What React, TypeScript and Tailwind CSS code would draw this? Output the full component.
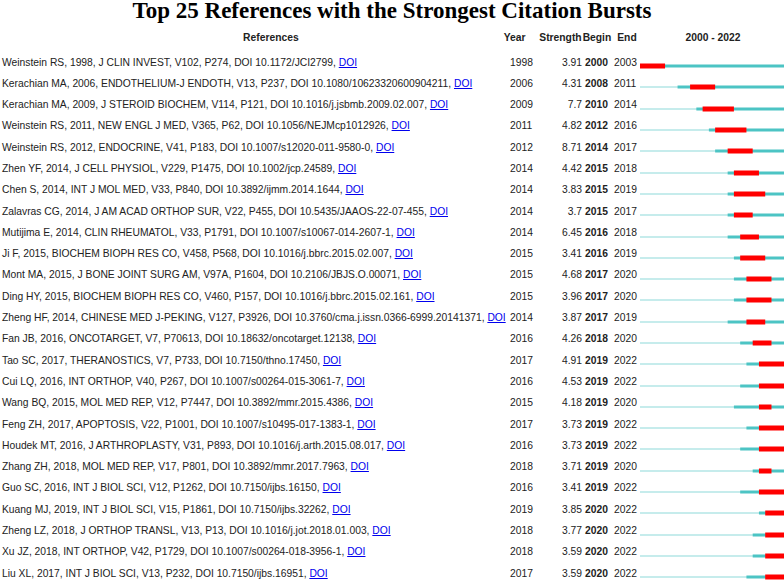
const rows: [string, number, string, number, number][] = [
  ["Weinstein RS, 1998, J CLIN INVEST, V102, P274, DOI 10.1172/JCI2799, ", 1998, "3.91", 2000, 2003],
  ["Kerachian MA, 2006, ENDOTHELIUM-J ENDOTH, V13, P237, DOI 10.1080/10623320600904211, ", 2006, "4.31", 2008, 2011],
  ["Kerachian MA, 2009, J STEROID BIOCHEM, V114, P121, DOI 10.1016/j.jsbmb.2009.02.007, ", 2009, "7.7", 2010, 2014],
  ["Weinstein RS, 2011, NEW ENGL J MED, V365, P62, DOI 10.1056/NEJMcp1012926, ", 2011, "4.82", 2012, 2016],
  ["Weinstein RS, 2012, ENDOCRINE, V41, P183, DOI 10.1007/s12020-011-9580-0, ", 2012, "8.71", 2014, 2017],
  ["Zhen YF, 2014, J CELL PHYSIOL, V229, P1475, DOI 10.1002/jcp.24589, ", 2014, "4.42", 2015, 2018],
  ["Chen S, 2014, INT J MOL MED, V33, P840, DOI 10.3892/ijmm.2014.1644, ", 2014, "3.83", 2015, 2019],
  ["Zalavras CG, 2014, J AM ACAD ORTHOP SUR, V22, P455, DOI 10.5435/JAAOS-22-07-455, ", 2014, "3.7", 2015, 2017],
  ["Mutijima E, 2014, CLIN RHEUMATOL, V33, P1791, DOI 10.1007/s10067-014-2607-1, ", 2014, "6.45", 2016, 2018],
  ["Ji F, 2015, BIOCHEM BIOPH RES CO, V458, P568, DOI 10.1016/j.bbrc.2015.02.007, ", 2015, "3.41", 2016, 2019],
  ["Mont MA, 2015, J BONE JOINT SURG AM, V97A, P1604, DOI 10.2106/JBJS.O.00071, ", 2015, "4.68", 2017, 2020],
  ["Ding HY, 2015, BIOCHEM BIOPH RES CO, V460, P157, DOI 10.1016/j.bbrc.2015.02.161, ", 2015, "3.96", 2017, 2020],
  ["Zheng HF, 2014, CHINESE MED J-PEKING, V127, P3926, DOI 10.3760/cma.j.issn.0366-6999.20141371, ", 2014, "3.87", 2017, 2019],
  ["Fan JB, 2016, ONCOTARGET, V7, P70613, DOI 10.18632/oncotarget.12138, ", 2016, "4.26", 2018, 2020],
  ["Tao SC, 2017, THERANOSTICS, V7, P733, DOI 10.7150/thno.17450, ", 2017, "4.91", 2019, 2022],
  ["Cui LQ, 2016, INT ORTHOP, V40, P267, DOI 10.1007/s00264-015-3061-7, ", 2016, "4.53", 2019, 2022],
  ["Wang BQ, 2015, MOL MED REP, V12, P7447, DOI 10.3892/mmr.2015.4386, ", 2015, "4.18", 2019, 2020],
  ["Feng ZH, 2017, APOPTOSIS, V22, P1001, DOI 10.1007/s10495-017-1383-1, ", 2017, "3.73", 2019, 2022],
  ["Houdek MT, 2016, J ARTHROPLASTY, V31, P893, DOI 10.1016/j.arth.2015.08.017, ", 2016, "3.73", 2019, 2022],
  ["Zhang ZH, 2018, MOL MED REP, V17, P801, DOI 10.3892/mmr.2017.7963, ", 2018, "3.71", 2019, 2020],
  ["Guo SC, 2016, INT J BIOL SCI, V12, P1262, DOI 10.7150/ijbs.16150, ", 2016, "3.41", 2019, 2022],
  ["Kuang MJ, 2019, INT J BIOL SCI, V15, P1861, DOI 10.7150/ijbs.32262, ", 2019, "3.85", 2020, 2022],
  ["Zheng LZ, 2018, J ORTHOP TRANSL, V13, P13, DOI 10.1016/j.jot.2018.01.003, ", 2018, "3.77", 2020, 2022],
  ["Xu JZ, 2018, INT ORTHOP, V42, P1729, DOI 10.1007/s00264-018-3956-1, ", 2018, "3.59", 2020, 2022],
  ["Liu XL, 2017, INT J BIOL SCI, V13, P232, DOI 10.7150/ijbs.16951, ", 2017, "3.59", 2020, 2022],
];

const W = 144;
const px = (y: number) => ((y - 2000) / 23) * W;

function Timeline({ year, begin, end }: { year: number; begin: number; end: number }) {
  const start = Math.max(px(year), 0);
  return (
    <svg width={W} height={21} className="block">
      <rect x={0} y={13} width={W} height={2} fill="#c6ecec" />
      <rect x={start} y={12.5} width={W - start} height={3} fill="#4cc4c4" />
      <rect x={px(begin)} y={11.5} width={px(end + 1) - px(begin)} height={5} fill="#ff0000" />
    </svg>
  );
}

export default function App() {
  return (
    <div className="w-[784px] h-[580px] bg-white overflow-hidden text-[10.3px] text-[#222]" style={{ fontFamily: "Arial, 'Liberation Sans', sans-serif" }}>
      <div className="h-[24px] text-center text-[23px] font-bold leading-[22px] text-black" style={{ fontFamily: "'Liberation Serif', serif" }}>
        Top 25 References with the Strongest Citation Bursts
      </div>
      <div className="flex h-[28px] items-center font-bold">
        <div className="w-[508px] text-center pl-[40px]">References</div>
        <div className="w-[38px] pl-[2px]">Year</div>
        <div className="w-[44px]">Strength</div>
        <div className="w-[32px]">Begin</div>
        <div className="w-[28px] pl-[3px]">End</div>
        <div className="w-[144px] text-center">2000 - 2022</div>
      </div>
      {rows.map(([ref, year, s, b, e], i) => (
        <div key={i} className="flex h-[21.3px] items-center leading-none">
          <div className="w-[508px] pl-[2px] whitespace-nowrap">
            {ref}
            <span className="text-[#0000ee] underline">DOI</span>
          </div>
          <div className="w-[40px] pl-[2px]">{year}</div>
          <div className="w-[34px] text-right">{s}</div>
          <div className="w-[28px] pl-[3px] font-bold">{b}</div>
          <div className="w-[30px] pl-[4px]">{e}</div>
          <Timeline year={year} begin={b} end={e} />
        </div>
      ))}
    </div>
  );
}
